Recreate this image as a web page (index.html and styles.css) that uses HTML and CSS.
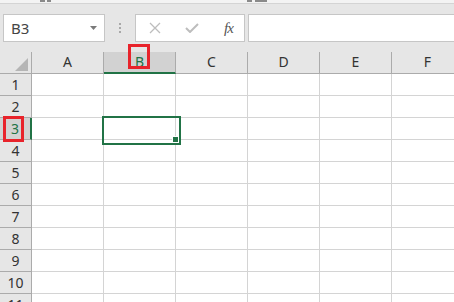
FILE: index.html
```html
<!DOCTYPE html>
<html lang="en">
<head>
    <meta charset="UTF-8">
    <title>Sheet</title>
    <link rel="stylesheet" href="styles.css">
</head>
<body>

<div class="ribbon-edge">
    <span class="mark m1"></span><span class="mark m2"></span>
    <span class="mark m3"></span><span class="mark m4"></span>
</div>

<div class="toolbar">
    <div class="name-box">
        <span>B3</span>
        <svg class="drop" width="7" height="4" viewBox="0 0 7 4"><polygon points="0,0 7,0 3.5,4" fill="#7a7a7a"/></svg>
    </div>
    <div class="grip"><i></i><i></i><i></i></div>
    <div class="fx-buttons">
        <svg width="12" height="12" viewBox="0 0 12 12"><path d="M1 1 L11 11 M11 1 L1 11" stroke="#bdbdbd" stroke-width="1.3" fill="none"/></svg>
        <svg width="14" height="10" viewBox="0 0 14 10"><path d="M1 5 L5 9 L13 1" stroke="#bdbdbd" stroke-width="2" fill="none"/></svg>
        <span class="fx">fx</span>
    </div>
    <div class="formula"></div>
</div>

<div class="sheet">
    <div class="row head">
        <div class="rh corner">
            <svg width="13" height="13" viewBox="0 0 13 13"><polygon points="13,0 13,13 0,13" fill="#b5b5b5"/></svg>
        </div>
        <div class="ch">A</div>
        <div class="ch active">B<span class="mark-box"></span></div>
        <div class="ch">C</div>
        <div class="ch">D</div>
        <div class="ch">E</div>
        <div class="ch">F</div>
    </div>
    <div class="row"><div class="rh">1</div><div class="c"></div><div class="c"></div><div class="c"></div><div class="c"></div><div class="c"></div><div class="c"></div></div>
    <div class="row"><div class="rh">2</div><div class="c"></div><div class="c"></div><div class="c"></div><div class="c"></div><div class="c"></div><div class="c"></div></div>
    <div class="row"><div class="rh active">3<span class="mark-box"></span></div><div class="c"></div><div class="c selected"><span class="handle"></span></div><div class="c"></div><div class="c"></div><div class="c"></div><div class="c"></div></div>
    <div class="row"><div class="rh">4</div><div class="c"></div><div class="c"></div><div class="c"></div><div class="c"></div><div class="c"></div><div class="c"></div></div>
    <div class="row"><div class="rh">5</div><div class="c"></div><div class="c"></div><div class="c"></div><div class="c"></div><div class="c"></div><div class="c"></div></div>
    <div class="row"><div class="rh">6</div><div class="c"></div><div class="c"></div><div class="c"></div><div class="c"></div><div class="c"></div><div class="c"></div></div>
    <div class="row"><div class="rh">7</div><div class="c"></div><div class="c"></div><div class="c"></div><div class="c"></div><div class="c"></div><div class="c"></div></div>
    <div class="row"><div class="rh">8</div><div class="c"></div><div class="c"></div><div class="c"></div><div class="c"></div><div class="c"></div><div class="c"></div></div>
    <div class="row"><div class="rh">9</div><div class="c"></div><div class="c"></div><div class="c"></div><div class="c"></div><div class="c"></div><div class="c"></div></div>
    <div class="row"><div class="rh">10</div><div class="c"></div><div class="c"></div><div class="c"></div><div class="c"></div><div class="c"></div><div class="c"></div></div>
    <div class="row"><div class="rh">11</div><div class="c"></div><div class="c"></div><div class="c"></div><div class="c"></div><div class="c"></div><div class="c"></div></div>
</div>

</body>
</html>
```

FILE: styles.css
```css
* {
    box-sizing: border-box;
}
body {
    margin: 0;
    width: 454px;
    height: 302px;
    overflow: hidden;
    background-color: #e6e6e6;
    font-family: "Noto Sans", "Open Sans", sans-serif;
    color: #333;
}
.ribbon-edge {
    height: 4px;
    background-color: #f3f3f3;
    border-bottom: 1px solid #d4d4d4;
    position: relative;
}
.mark {
    position: absolute;
    top: 0;
    height: 2px;
    background-color: #8a8a8a;
}
.m1 { left: 40px; width: 5px; }
.m2 { left: 47px; width: 4px; }
.m3 { left: 247px; width: 5px; }
.m4 { left: 255px; width: 12px; }
.toolbar {
    display: flex;
    align-items: center;
    height: 48px;
    padding: 10px 0 10px 3px;
    white-space: nowrap;
}
.name-box {
    display: flex;
    align-items: center;
    justify-content: space-between;
    width: 102px;
    height: 28px;
    padding: 0 7px 0 7px;
    background-color: #fff;
    border: 1px solid #c6c6c6;
    font-size: 15px;
    color: #444;
}
.grip {
    width: 30px;
    display: flex;
    flex-direction: column;
    align-items: center;
    gap: 2px;
}
.grip i {
    width: 2px;
    height: 2px;
    background-color: #a8a8a8;
}
.fx-buttons {
    display: flex;
    align-items: center;
    width: 110px;
    height: 28px;
    padding: 0 0 0 13px;
    gap: 24px;
    background-color: #fff;
    border: 1px solid #c6c6c6;
}
.fx-buttons .fx {
    font-family: "Liberation Serif", serif;
    font-style: italic;
    font-size: 15px;
    color: #555;
    margin-left: 1px;
    letter-spacing: -1px;
}
.formula {
    flex: 1;
    margin-left: 3px;
    height: 28px;
    background-color: #fff;
    border: 1px solid #c6c6c6;
    border-right: none;
}
.sheet {
    width: 454px;
}
.row {
    display: flex;
    height: 22px;
}
.rh, .ch, .c {
    flex: none;
    height: 22px;
    border-bottom: 1px solid #d4d4d4;
    border-right: 1px solid #d4d4d4;
}
.rh {
    width: 32px;
    display: flex;
    justify-content: center;
    align-items: center;
    font-size: 14px;
    color: #333;
    background-color: #e6e6e6;
    border-bottom-color: #ababab;
    border-right-color: #ababab;
    position: relative;
}
.rh.corner {
    justify-content: flex-end;
    align-items: flex-end;
    padding: 0 3px 2px 0;
}
.rh.active {
    background-color: #d2d2d2;
    color: #217346;
    border-right: 2px solid #217346;
}
.ch {
    width: 72px;
    display: flex;
    justify-content: center;
    align-items: center;
    padding-bottom: 2px;
    font-size: 14px;
    color: #333;
    background-color: #e6e6e6;
    border-bottom-color: #ababab;
    border-right-color: #ababab;
    position: relative;
}
.ch.active {
    background-color: #d2d2d2;
    color: #217346;
    border-bottom: 2px solid #217346;
}
.c {
    width: 72px;
    background-color: #fff;
    position: relative;
}
.c.selected {
    z-index: 2;
}
.c.selected::before {
    content: "";
    position: absolute;
    left: -2px;
    top: -2px;
    width: 75px;
    height: 25px;
    border: 2px solid #217346;
}
.handle {
    position: absolute;
    left: 68px;
    top: 18px;
    width: 7px;
    height: 7px;
    background-color: #217346;
    border: 1px solid #fff;
}
.mark-box {
    position: absolute;
    z-index: 3;
    border: 3px solid #e8232b;
}
.ch .mark-box {
    left: 24px;
    top: -8px;
    width: 22px;
    height: 25px;
}
.rh .mark-box {
    left: 3px;
    top: -2px;
    width: 21px;
    height: 26px;
}
```
